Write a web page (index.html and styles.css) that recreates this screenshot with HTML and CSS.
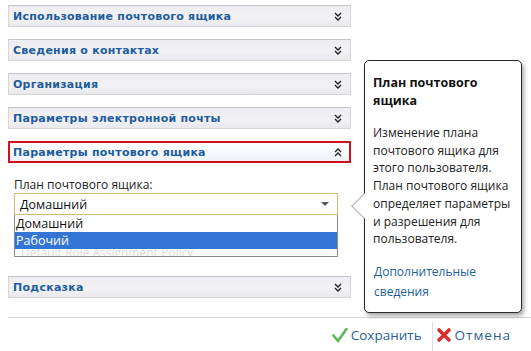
FILE: index.html
```html
<!DOCTYPE html>
<html lang="ru">
<head>
<meta charset="utf-8">
<link rel="stylesheet" href="styles.css">
</head>
<body>
<div class="page">
  <div class="sections">
    <div class="sec"><span class="sec-title">Использование почтового ящика</span><svg class="chev" viewBox="0 0 8 9"><path d="M1 1l3 3 3-3M1 5l3 3 3-3"/></svg></div>
    <div class="sec"><span class="sec-title">Сведения о контактах</span><svg class="chev" viewBox="0 0 8 9"><path d="M1 1l3 3 3-3M1 5l3 3 3-3"/></svg></div>
    <div class="sec"><span class="sec-title">Организация</span><svg class="chev" viewBox="0 0 8 9"><path d="M1 1l3 3 3-3M1 5l3 3 3-3"/></svg></div>
    <div class="sec"><span class="sec-title">Параметры электронной почты</span><svg class="chev" viewBox="0 0 8 9"><path d="M1 1l3 3 3-3M1 5l3 3 3-3"/></svg></div>
    <div class="sec sec-active"><span class="sec-title">Параметры почтового ящика</span><svg class="chev" viewBox="0 0 8 9"><path d="M1 4l3-3 3 3M1 8l3-3 3 3"/></svg></div>
    <div class="field">
      <div class="label">План почтового ящика:</div>
      <div class="select-wrap">
        <div class="select"><span>Домашний</span><svg class="caret" viewBox="0 0 8 4"><path d="M0 0h8L4 4z"/></svg></div>
        <div class="list">
          <div class="opt">Домашний</div>
          <div class="opt opt-sel">Рабочий</div>
          <div class="opt opt-ghost">Default Role Assignment Policy</div>
        </div>
      </div>
    </div>
    <div class="sec"><span class="sec-title">Подсказка</span><svg class="chev" viewBox="0 0 8 9"><path d="M1 1l3 3 3-3M1 5l3 3 3-3"/></svg></div>
  </div>
  <div class="footer">
    <div class="btn"><svg class="ico" viewBox="0 0 16 16"><path d="M1.5 8.5l4.5 5.5 8.5-12" fill="none" stroke="#5cb85c" stroke-width="2.6" stroke-linecap="round" stroke-linejoin="round"/></svg><span>Сохранить</span></div>
    <div class="sep"></div>
    <div class="btn"><svg class="ico" viewBox="0 0 16 16"><path d="M3 3l10 10M13 3L3 13" fill="none" stroke="#d9302c" stroke-width="3.6" stroke-linecap="round"/></svg><span class="wide">Отмена</span></div>
  </div>
  <div class="tip">
    <div class="tip-arrow"></div>
    <div class="tip-title">План почтового ящика</div>
    <div class="tip-body">Изменение плана почтового ящика для этого пользователя. План почтового ящика определяет параметры и разрешения для пользователя.</div>
    <div class="tip-link">Дополнительные сведения</div>
  </div>
</div>
</body>
</html>
```
FILE: styles.css
```css
html, body { margin: 0; padding: 0; background: #fff; }
body { width: 531px; height: 351px; overflow: hidden; font-family: "Open Sans", "Liberation Sans", sans-serif; }
.page { position: relative; width: 531px; height: 351px; }
.sections { padding: 5px 0 0 8px; width: 343px; display: flex; flex-direction: column; }
.sec {
  height: 22px; box-sizing: border-box; margin-bottom: 12px; flex: none;
  display: flex; align-items: center; justify-content: space-between;
  padding: 0 8px 0 4px;
  background: linear-gradient(#eeeef2, #f2f2f5 60%, #e9e9ed);
  border: 1px solid #d6d6d8; border-top-color: #c4c4c8;
}
.sec-title { font-family: "DejaVu Sans", sans-serif; font-weight: bold; font-size: 11px; color: #1e5c9c; letter-spacing: 0.25px; }
.chev { width: 8px; height: 9px; }
.chev path { fill: none; stroke: #222; stroke-width: 1.4; }
.sec-active { border: 2px solid #d0101e; background: linear-gradient(#ffffff, #eef3f8); padding-left: 3px; padding-right: 7px; }
.field { margin-top: 2px; padding-left: 6px; height: 99px; flex: none; }
.label { font-size: 12px; color: #222; height: 16px; line-height: 16px; }
.select-wrap { position: relative; width: 324px; }
.select {
  height: 22px; box-sizing: border-box; border: 1px solid #d2b778;
  display: flex; align-items: center; justify-content: space-between;
  padding: 0 8px 0 5px; font-size: 12.5px; color: #111; background: #fff;
}
.caret { width: 8px; height: 4px; fill: #555; }
.list {
  position: absolute; left: 0; top: 22px; width: 324px; height: 42px; box-sizing: border-box;
  border: 1px solid #8a8a8a; border-top: none; background: #fff; overflow: hidden;
}
.opt { height: 17px; line-height: 17px; font-size: 12.5px; color: #111; padding-left: 1px; }
.opt-sel { background: #3275d4; color: #fff; position: relative; z-index: 1; }
.opt-ghost { color: #dadada; padding-left: 6px; line-height: 17px; margin-top: -5px; font-size: 12px; }
.footer {
  position: absolute; left: 8px; top: 317px; right: 0; height: 34px;
  border-top: 1px solid #d4d4d4; display: flex; justify-content: flex-end; align-items: center;
  padding-right: 20px; box-sizing: border-box;
}
.btn { display: flex; align-items: center; gap: 3px; font-size: 13.5px; color: #2a5f95; }
.wide { letter-spacing: 1px; }
.ico { width: 16px; height: 16px; }
.sep { width: 1px; align-self: stretch; background: #dcdcdc; margin: 4px 3px -4px 10px; }
.tip {
  position: absolute; left: 364px; top: 60px; width: 158px; height: 253px; box-sizing: border-box;
  border: 1px solid #2a2a2a; border-radius: 5px; background: #fff;
  box-shadow: 2px 3px 4px rgba(0,0,0,0.35);
  padding: 13px 4px 0 8px; font-size: 12px; color: #222;
}
.tip-arrow {
  position: absolute; left: -10px; top: 136px; width: 17px; height: 17px; background: #fff;
  border-left: 1px solid #b0b0b0; border-bottom: 1px solid #b0b0b0; transform: rotate(45deg);
}
.tip-title { font-weight: bold; font-size: 12.5px; line-height: 18px; color: #111; position: relative; }
.tip-body { margin-top: 14px; line-height: 17.7px; position: relative; }
.tip-link { margin-top: 14px; line-height: 20px; color: #1f5f9a; padding-left: 1px; }
```
